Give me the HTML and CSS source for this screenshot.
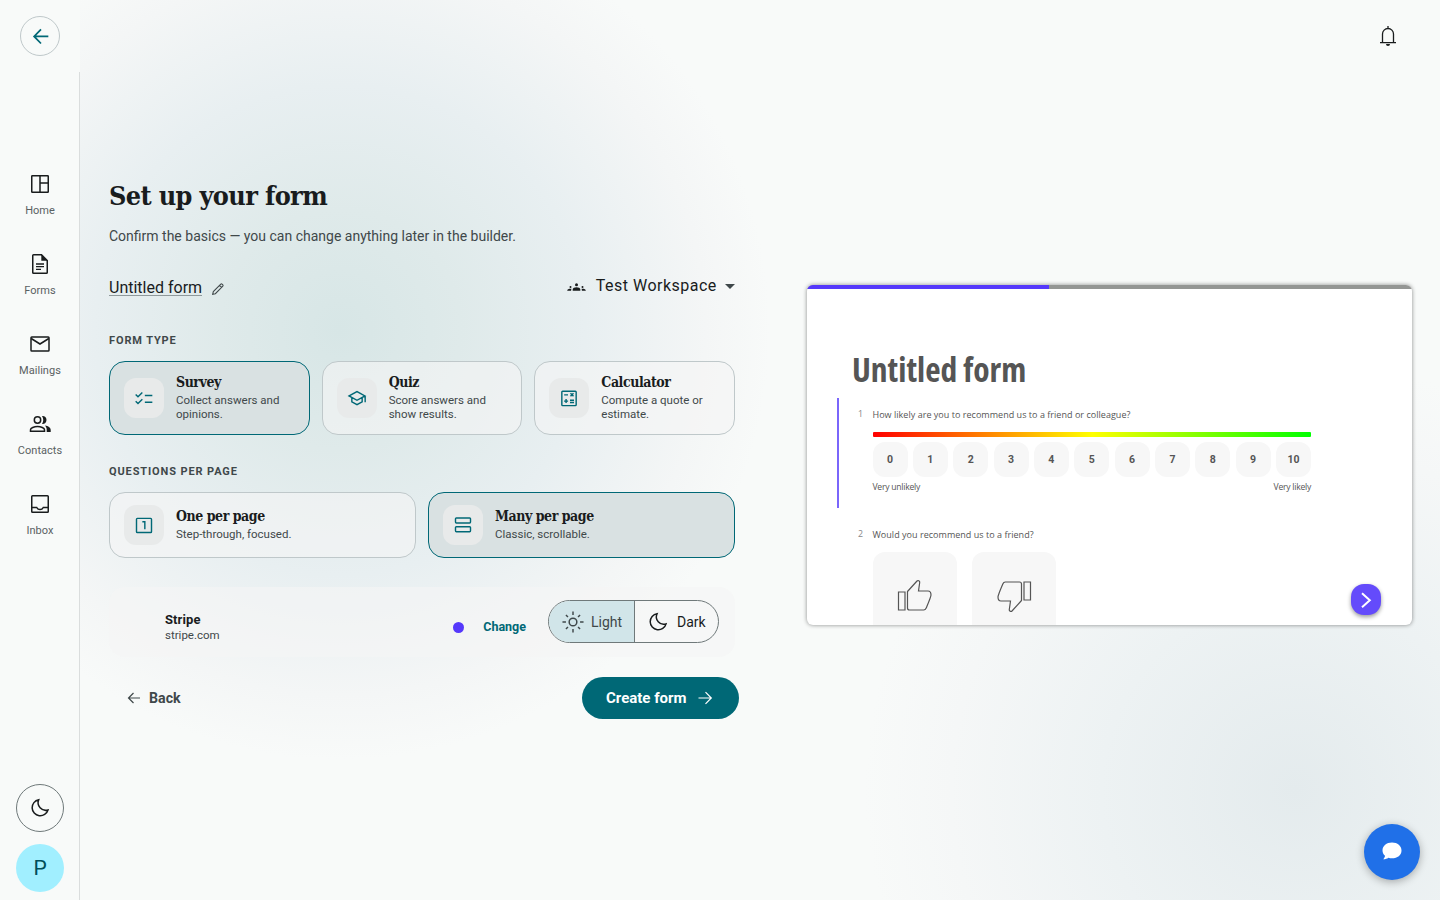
FILE: index.html
```html
<!DOCTYPE html>
<html lang="en">
<head>
  <meta charset="UTF-8" />
  <meta name="viewport" content="width=device-width, initial-scale=1.0" />
  <title>Set up your form</title>
  <link rel="stylesheet" href="styles.css">
</head>
<body>

  <aside class="sidebar">
    <button class="back-circle" title="Back">
      <svg viewBox="0 0 24 24"><path d="M20 12.500H4.500M12 4.800L4.500 12.500l7.500 7.700"/></svg>
    </button>

    <nav class="nav">
      <a class="nav-item">
        <svg class="icon line" viewBox="0 0 24 24"><rect x="3.750" y="3.750" width="16.500" height="16.500" rx=".6"/><path d="M12 4v16M12 11h8"/></svg>
        <span>Home</span>
      </a>
      <a class="nav-item">
        <svg class="icon line" viewBox="0 0 24 24"><path d="M13.500 2.750H5.600c-.5 0-.85.35-.85.850v16.800c0 .5.35.85.85.850h12.800c.5 0 .85-.35.85-.850V8.500z"/><path d="M8 12h8M8 14.700h8M8 17.400h5" stroke-width="1.300"/><path class="solid" d="M13.300 2.500l6.200 6.200h-6.200z"/></svg>
        <span>Forms</span>
      </a>
      <a class="nav-item">
        <svg class="icon line" viewBox="0 0 24 24"><rect x="3" y="5" width="18" height="14" rx=".8"/><path d="M3.200 6.500L12 12l8.800-5.500"/></svg>
        <span>Mailings</span>
      </a>
      <a class="nav-item">
        <svg class="icon line" viewBox="0 0 24 24"><circle cx="9.500" cy="8" r="3.200"/><path d="M2.500 19.200v-1.400c0-1.800 3.600-3.300 7-3.300s7 1.500 7 3.300v1.400z"/><path class="solid" d="M14 12c2.500.3 4.500-1.500 4.500-4S16.500 3.800 14 4.100C15.700 6.400 15.700 9.700 14 12zM17 13.500c3.200.6 5.700 2 5.700 4.300V20h-4v-2.200c0-1.700-.6-3.200-1.700-4.300z"/></svg>
        <span>Contacts</span>
      </a>
      <a class="nav-item">
        <svg class="icon line" viewBox="0 0 24 24"><rect x="3.750" y="3.750" width="16.500" height="16.500" rx=".8"/><path d="M4 15.500h4.700c.7 1.300 1.800 2 3.300 2s2.600-.7 3.300-2H20"/></svg>
        <span>Inbox</span>
      </a>
    </nav>

    <div class="sidebar-bottom">
      <button class="moon-circle" title="Dark mode">
        <svg class="icon line" viewBox="0 0 24 24"><path d="M10.700 3.700A8.100 8.100 0 1 0 20 14 7.700 7.700 0 0 1 10.700 3.700z"/></svg>
      </button>
      <div class="avatar">P</div>
    </div>
  </aside>

  <div class="page">
    <header class="topbar">
      <svg class="icon bell" viewBox="0 0 24 24"><path d="M4 18.600h16M6.500 18.500V10a5.500 5.500 0 0 1 11 0v8.500M12 4.500V2"/><path class="solid" d="M10 20h4a2 2 0 0 1-4 0z"/></svg>
    </header>

    <main class="content">
      <section class="setup">
        <h1>Set up your form</h1>
        <p class="subtitle">Confirm the basics — you can change anything later in the builder.</p>

        <div class="name-row">
          <div class="form-name">
            <span>Untitled form</span>
            <svg viewBox="0 0 24 24"><path d="M2.800 21.200l1.200-4.700L16.800 3.700a1.500 1.500 0 0 1 2.100 0l1.400 1.400a1.500 1.500 0 0 1 0 2.100L7.500 20 2.800 21.200zM14.800 6l3.300 3.300"/></svg>
          </div>
          <div class="workspace">
            <svg class="groups" viewBox="0 0 18.400 8"><circle cx="9.200" cy="1.700" r="1.500"/><path d="M5.400 7.700V6.500c0-1.300 1.900-2.200 3.800-2.200s3.800.9 3.800 2.200v1.200z"/><circle cx="3.200" cy="3.900" r="1"/><circle cx="15.200" cy="3.900" r="1"/><path d="M0 7.700v-.6c0-.9 1.600-1.600 4.200-1.400-.3.600-.4 1.200-.4 2zM18.400 7.700v-.6c0-.9-1.600-1.600-4.200-1.400.3.600.4 1.200.4 2z"/></svg>
            <span>Test Workspace</span>
            <i class="caret"></i>
          </div>
        </div>

        <h2>Form type</h2>
        <div class="cards three">
          <button class="card selected">
            <span class="tile"><svg viewBox="0 0 24 24"><path d="M2 7.800l2.800 2.800L10 5.400M2 15.800l2.800 2.800 5.200-5.200M13 9h9M13 17h9"/></svg></span>
            <span class="card-text"><b>Survey</b><small>Collect answers and opinions.</small></span>
          </button>
          <button class="card">
            <span class="tile"><svg viewBox="0 0 24 24"><path d="M2.500 9.500L12 4.300l9.500 5.200L12 14.700 2.500 9.500zM5.800 11.500v5L12 20l6.200-3.500v-5M21.800 9.500v7.500"/></svg></span>
            <span class="card-text"><b>Quiz</b><small>Score answers and show results.</small></span>
          </button>
          <button class="card">
            <span class="tile"><svg viewBox="0 0 24 24"><rect x="3.400" y="3.900" width="17.200" height="17.200" rx="1"/><path d="M6.200 8.200h4.600M13.800 6.400l3.600 3.600M17.400 6.400l-3.600 3.600M8.500 13.300v4.800M6.100 15.700h4.800M13.200 14.600h4.800M13.200 17.400h4.800"/></svg></span>
            <span class="card-text"><b>Calculator</b><small>Compute a quote or estimate.</small></span>
          </button>
        </div>

        <h2>Questions per page</h2>
        <div class="cards two">
          <button class="card">
            <span class="tile"><svg viewBox="0 0 24 24"><rect x="3" y="4" width="18" height="17" rx="1"/><path d="M10 8h3v9"/></svg></span>
            <span class="card-text"><b>One per page</b><small>Step-through, focused.</small></span>
          </button>
          <button class="card selected">
            <span class="tile"><svg viewBox="0 0 24 24"><rect x="3" y="3.500" width="18" height="6" rx="1"/><rect x="3" y="14" width="18" height="6" rx="1"/></svg></span>
            <span class="card-text"><b>Many per page</b><small>Classic, scrollable.</small></span>
          </button>
        </div>

        <div class="brand">
          <div class="brand-name"><b>Stripe</b><span>stripe.com</span></div>
          <i class="brand-color"></i>
          <a class="change">Change</a>
          <div class="mode">
            <button class="mode-light">
              <svg viewBox="0 0 24 24"><circle cx="12" cy="12" r="4.200"/><path d="M12 .5v3.800M12 19.700v3.800M.5 12h3.800M19.700 12h3.800M4.300 4.300l2.200 2.200M17.500 17.500l2.200 2.200M4.300 19.700l2.200-2.200M17.500 6.500l2.200-2.200"/></svg>
              Light
            </button>
            <button class="mode-dark">
              <svg viewBox="0 0 24 24"><path d="M11 3A8.800 8.800 0 1 0 20.800 14 8 8 0 0 1 11 3z"/></svg>
              Dark
            </button>
          </div>
        </div>

        <div class="actions">
          <button class="btn-back">
            <svg viewBox="0 0 16 16"><path d="M14 8H2.500M7.500 3l-5 5 5 5"/></svg>
            Back
          </button>
          <button class="btn-create">
            Create form
            <svg viewBox="0 0 16 16"><path d="M1.500 8h12.800M8.500 2.200L14.300 8l-5.800 5.800"/></svg>
          </button>
        </div>
      </section>

      <section class="preview">
        <div class="progress"><div class="progress-fill"></div></div>
        <div class="preview-title">Untitled form</div>

        <div class="question active">
          <span class="num">1</span>
          <div class="q-body">
            <p>How likely are you to recommend us to a friend or colleague?</p>
            <div class="rainbow"></div>
            <div class="scale">
              <span>0</span><span>1</span><span>2</span><span>3</span><span>4</span><span>5</span><span>6</span><span>7</span><span>8</span><span>9</span><span>10</span>
            </div>
            <div class="scale-labels"><span>Very unlikely</span><span>Very likely</span></div>
          </div>
        </div>

        <div class="question second">
          <span class="num">2</span>
          <div class="q-body">
            <p>Would you recommend us to a friend?</p>
            <div class="thumbs">
              <span><svg viewBox="0 0 36 36"><path d="M1.500 14h6.500v18H1.500zM10.500 13.500L20 3c1-1 3 0 2.700 1.500L21.500 13H31c2 0 3 1.500 3 4 0 2-4 11-4.800 13-.5 1.200-1.200 2-2.500 2H12.500c-1 0-2-.8-2-2z"/></svg></span>
              <span><svg class="down" viewBox="0 0 36 36"><path d="M1.500 14h6.500v18H1.500zM10.500 13.500L20 3c1-1 3 0 2.700 1.500L21.500 13H31c2 0 3 1.500 3 4 0 2-4 11-4.800 13-.5 1.200-1.200 2-2.500 2H12.500c-1 0-2-.8-2-2z"/></svg></span>
            </div>
          </div>
        </div>

        <button class="next"><svg viewBox="0 0 30 30"><path d="M11 8.200l7.800 7L11 22.200"/></svg></button>
      </section>
    </main>
  </div>

  <button class="chat" title="Chat">
    <svg viewBox="0 0 24 24"><path d="M12 3.500c-5.500 0-9.500 3.400-9.500 7.900 0 2.200 1 4 2.500 5.400-.1 1.300-.8 2.400-1.800 3.400 2 .1 3.800-.5 5.200-1.500 1.100.4 2.300.6 3.600.6 5.500 0 9.500-3.400 9.500-7.900s-4-7.900-9.500-7.900z"/></svg>
  </button>

</body>
</html>
```
FILE: styles.css
```css
:root {
  --bg: #f8faf9;
  --text: #191c1d;
  --muted: #3f484a;
  --primary: #006876;
  --border: #bfc8ca;
  --accent: #5538fb;
  --slab: "Roboto Slab", "DejaVu Serif Condensed", "DejaVu Serif", serif;
}

* {
  box-sizing: border-box;
  font-family: Roboto, sans-serif;
}

body {
  margin: 0;
  height: 900px;
  display: flex;
  overflow: hidden;
  background: var(--bg);
  color: var(--text);
}

button {
  border: none;
  padding: 0;
  background: none;
  color: inherit;
  cursor: pointer;
}

svg {
  display: block;
  flex: none;
  fill: none;
  stroke: currentColor;
  stroke-width: 2;
}

.icon {
  width: 24px;
  height: 24px;
  stroke-width: 1.5;
}

.icon .solid { fill: currentColor; stroke: none; }

/* sidebar */
.sidebar {
  width: 80px;
  flex: none;
  display: flex;
  flex-direction: column;
  align-items: center;
  padding: 16px 0 8px;
  background: linear-gradient(#dadddd, #dadddd) right 72px / 1px 100% no-repeat var(--bg);
}

.back-circle {
  width: 40px;
  height: 40px;
  display: flex;
  align-items: center;
  justify-content: center;
  border: 1px solid var(--border);
  border-radius: 50%;
  color: var(--primary);
}

.back-circle svg { width: 22px; height: 22px; margin-left: 1px; stroke-width: 1.9; }

.nav {
  margin-top: 116px;
  display: flex;
  flex-direction: column;
  gap: 36px;
}

.nav-item {
  height: 44px;
  display: flex;
  flex-direction: column;
  align-items: center;
  gap: 8px;
}

.nav-item span {
  font-size: 11px;
  line-height: 14px;
  letter-spacing: 0.03px;
  color: #5a6163;
}

.sidebar-bottom {
  margin-top: auto;
  display: flex;
  flex-direction: column;
  gap: 12px;
}

.moon-circle, .avatar {
  width: 48px;
  height: 48px;
  display: flex;
  align-items: center;
  justify-content: center;
  border-radius: 50%;
}

.moon-circle { border: 1px solid #6f797a; }

.avatar {
  background: #a1efff;
  color: #004e59;
  font-size: 21px;
}

/* page */
.page {
  flex: 1;
  background:
    radial-gradient(circle 430px at 260px 330px, #d7e6e6 0%, #dfeaea 28%, #e8eff1 57%, #f4f6f6 85%, rgba(248,250,249,0) 100%),
    radial-gradient(circle 430px at 1215px 790px, #e4ebed 0%, #edf2f3 45%, #f5f7f7 80%, rgba(248,250,249,0) 100%);
}

.topbar {
  height: 72px;
  display: flex;
  align-items: center;
  justify-content: flex-end;
  padding-right: 40px;
}

.bell { stroke-width: 1.3; }

.content {
  display: flex;
  align-items: flex-start;
  padding: 104px 28px 0 29px;
}

.setup { width: 626px; flex: none; }

h1 {
  margin: 0;
  font-family: var(--slab);
  font-size: 26.8px;
  line-height: 40px;
  font-weight: 700;
  letter-spacing: -0.65px;
}

.subtitle {
  margin: 10px 0 0;
  font-size: 14px;
  line-height: 20px;
  color: var(--muted);
}

.name-row {
  margin-top: 27px;
  height: 24px;
  display: flex;
  justify-content: space-between;
}

.form-name, .workspace { display: flex; align-items: center; }
.form-name { gap: 9px; padding-top: 5px; }

.form-name span {
  height: 17px;
  font-size: 16px;
  line-height: 18px;
  border-bottom: 1px solid #8f999b;
}

.form-name svg { width: 14px; height: 14px; margin-top: 3px; stroke-width: 1.8; color: var(--muted); }

.workspace {
  height: 24px;
  font-size: 16px;
  letter-spacing: 0.48px;
}

.workspace .groups {
  width: 19px;
  height: 8px;
  margin: 3px 10px 0 0;
  fill: currentColor;
  stroke: none;
}

.caret {
  margin: 2px 0 0 8.3px;
  border: 5px solid transparent;
  border-top-color: var(--muted);
  border-bottom: none;
}

h2 {
  margin: 37px 0 13px;
  font-size: 11px;
  line-height: 14px;
  font-weight: 700;
  letter-spacing: 0.88px;
  text-transform: uppercase;
  color: var(--muted);
}

.cards { display: grid; gap: 12px; }
.three { grid-template-columns: repeat(3, 1fr); }
.two { grid-template-columns: repeat(2, 1fr); }
.cards + h2 { margin-top: 30px; }

.card {
  display: flex;
  align-items: center;
  gap: 12px;
  padding: 12px 14px;
  border: 1px solid var(--border);
  border-radius: 16px;
  background: rgba(245, 245, 245, 0.6);
  text-align: left;
}

.card.selected {
  border-color: var(--primary);
  background: #d9e1e2;
}

.tile {
  width: 40px;
  height: 40px;
  flex: none;
  display: flex;
  align-items: center;
  justify-content: center;
  border-radius: 12px;
  background: #e8eaea;
  color: var(--primary);
}

.tile svg { width: 20px; height: 20px; stroke-width: 1.7; }

.card-text b {
  display: block;
  margin-top: -2px;
  font-family: var(--slab);
  font-size: 14px;
  line-height: 20px;
  letter-spacing: -0.45px;
}

.card-text small {
  display: block;
  margin-top: 1px;
  margin-bottom: 1px;
  font-size: 11.5px;
  line-height: 14px;
  color: var(--muted);
}

.three .card { height: 74px; }

.brand {
  margin-top: 29px;
  height: 70px;
  display: flex;
  align-items: center;
  padding: 0 16px 0 56px;
  border-radius: 16px;
  background: rgba(245, 245, 245, 0.6);
}

.brand-name { flex: 1; padding-top: 11px; }
.brand-name b, .brand-name span { display: block; line-height: 16px; }
.brand-name b { font-size: 13px; letter-spacing: 0.1px; }
.brand-name span { margin-top: -1px; font-size: 11.5px; color: var(--muted); }

.brand-color {
  width: 11px;
  height: 11px;
  margin: 10px 19px 0 0;
  border-radius: 50%;
  background: var(--accent);
}

.change {
  margin: 8px 22px 0 0;
  font-size: 12.5px;
  font-weight: 700;
  color: var(--primary);
}

.mode {
  height: 43px;
  margin-bottom: 1px;
  display: flex;
  border: 1px solid #6f797a;
  border-radius: 22px;
  overflow: hidden;
}

.mode button {
  display: flex;
  align-items: center;
  font-size: 14px;
}

.mode svg { width: 22px; height: 22px; stroke-width: 1.6; }

.mode .mode-light {
  width: 86px;
  padding-left: 13px;
  gap: 7px;
  background: #d1e5e9;
  border-right: 1px solid #6f797a;
  color: var(--muted);
}

.mode .mode-dark { width: 83px; padding-left: 12px; gap: 8px; }

.actions {
  margin: 20px -4px 0 0;
  display: flex;
  justify-content: space-between;
}

.actions button {
  height: 42px;
  display: flex;
  align-items: center;
  font-size: 14.2px;
  font-weight: 700;
}

.actions svg { width: 16px; height: 16px; stroke-width: 1.2; }
.btn-back { padding-left: 17px; gap: 7px; color: var(--muted); }

.actions .btn-create {
  width: 157px;
  padding-left: 24px;
  gap: 10px;
  border-radius: 21px;
  background: var(--primary);
  color: #fff;
  font-size: 15px;
}

/* form preview */
.preview {
  position: relative;
  width: 605px;
  height: 340px;
  margin: 109px 0 0 72px;
  border-radius: 6px;
  overflow: hidden;
  background: #fff;
  color: #555;
  box-shadow: 0 0 4px rgba(0, 0, 0, 0.45);
}

.progress { height: 4px; background: #949694; }
.progress-fill { width: 40%; height: 4px; background: var(--accent); }

.preview-title {
  margin: 57px 0 0 45px;
  font-family: "Open Sans", sans-serif;
  font-stretch: 75%;
  font-size: 33.5px;
  line-height: 46px;
  font-weight: 700;
}

.question {
  display: flex;
  margin-left: 30px;
  padding-left: 19px;
  border-left: 2px solid transparent;
}

.question.active {
  height: 110px;
  margin-top: 6px;
  border-color: #7a66fb;
}

.num {
  width: 14.5px;
  padding-top: 10px;
  font-family: "Open Sans", sans-serif;
  font-size: 8.8px;
  line-height: 12px;
  color: #888;
}

.q-body { width: 438.5px; }

.q-body p {
  margin: 10px 0 11px;
  font-family: "Open Sans", sans-serif;
  font-size: 9px;
  line-height: 13px;
  letter-spacing: 0.03px;
}

.rainbow {
  height: 5px;
  border-radius: 1px;
  background: linear-gradient(90deg, #f00, #ff0 50%, #0f0);
}

.scale {
  margin-top: 5px;
  display: flex;
  justify-content: space-between;
}

.scale span {
  width: 35px;
  height: 35px;
  border-radius: 12px;
  background: #f7f7f7;
  font-size: 10.5px;
  line-height: 36px;
  font-weight: 700;
  text-align: center;
}

.scale-labels {
  margin-top: 4px;
  display: flex;
  justify-content: space-between;
}

.scale-labels span {
  font-family: "Open Sans", sans-serif;
  font-size: 8.6px;
  line-height: 12px;
  letter-spacing: -0.25px;
}

.second { margin-top: 10px; }
.thumbs { display: flex; gap: 15px; }

.thumbs span {
  width: 84px;
  height: 87px;
  display: flex;
  align-items: center;
  justify-content: center;
  border-radius: 12px;
  background: #f7f7f7;
}

.thumbs svg { width: 36px; height: 36px; stroke-width: 1.2; }
.thumbs .down { transform: rotate(180deg); }

.next {
  position: absolute;
  right: 31px;
  bottom: 10px;
  width: 30px;
  height: 31px;
  border-radius: 13px;
  background: #644bfb;
  color: #fff;
  box-shadow: 0 2px 4px rgba(0, 0, 0, 0.4);
}

/* floating chat button */
.chat {
  position: absolute;
  right: 20px;
  bottom: 20px;
  width: 56px;
  height: 56px;
  display: flex;
  align-items: center;
  justify-content: center;
  padding-bottom: 2px;
  border-radius: 50%;
  background: #2070e8;
  color: #fff;
  box-shadow: 0 2px 8px rgba(0, 0, 0, 0.3);
}

.chat svg { width: 24px; height: 24px; fill: currentColor; stroke: none; }
```
